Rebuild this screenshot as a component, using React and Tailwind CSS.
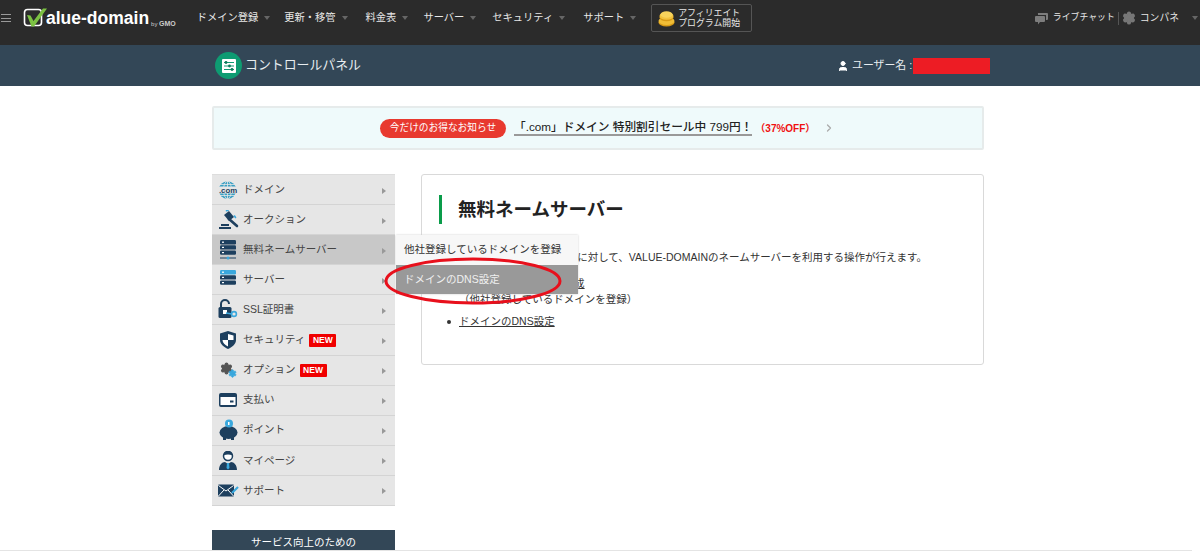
import { ChevronRight, Settings, User } from "lucide-react";

const navItems = [
  { label: "ドメイン登録", className: "ml-[21px]" },
  { label: "更新・移管", className: "ml-[14px]" },
  { label: "料金表", className: "ml-[18px]" },
  { label: "サーバー", className: "ml-[15px]" },
  { label: "セキュリティ", className: "ml-[16px]" },
  { label: "サポート", className: "ml-[18px]" },
];

const Caret = () => (
  <span className="ml-[6px] h-0 w-0 border-x-[3.5px] border-t-[4px] border-x-transparent border-t-[#666]" />
);

const Logo = () => (
  <div className="ml-[12px] flex items-end text-white">
    <svg width="27" height="20" viewBox="0 0 27 20" className="-mr-[4px] mb-[1px]">
      <rect x="1.500" y="1.500" width="17" height="16" rx="3" fill="none" stroke="#fff" strokeWidth="1.600" />
      <path d="M4 7 L7.500 7.500 L10.500 13 L20 0.500 L24 0.500 L11 18.500 L8.500 18.500 Z" fill="#7cc243" />
    </svg>
    <span className="font-['Liberation_Sans'] text-[17.500px] font-bold leading-[22px]">alue-domain</span>
    <span className="mb-[1px] ml-[2px] font-['Liberation_Sans'] text-[6px] leading-[8px] text-[#ccc]">
      by <b className="text-[7px]">GMO</b>
    </span>
  </div>
);

const Coins = () => (
  <svg width="17" height="17" viewBox="0 0 17 17">
    <ellipse cx="8.500" cy="12.500" rx="8" ry="4" fill="#d79a16" />
    <ellipse cx="8.500" cy="11" rx="8" ry="4" fill="#f0bd36" />
    <ellipse cx="8.500" cy="7.500" rx="7" ry="3.800" fill="#d79a16" />
    <ellipse cx="8.500" cy="6" rx="7" ry="3.800" fill="#f2c23e" />
    <ellipse cx="8.500" cy="4.500" rx="6" ry="3.200" fill="#f7d35c" />
  </svg>
);

const ChatIcon = () => (
  <svg width="13" height="13" viewBox="0 0 13 13" fill="#7d7d7d">
    <path d="M3 1h9a1 1 0 0 1 1 1v5a1 1 0 0 1-1 1h-1V3H3V2a1 1 0 0 1 0-1z" />
    <path d="M1 4h8a1 1 0 0 1 1 1v4a1 1 0 0 1-1 1H5l-2 2.500V10H1a1 1 0 0 1-1-1V5a1 1 0 0 1 1-1z" />
  </svg>
);

const PanelIcon = () => (
  <span className="flex h-[27px] w-[27px] items-center justify-center rounded-full bg-[#0e9b72]">
    <svg width="14" height="14" viewBox="0 0 14 14">
      <rect width="14" height="14" rx="1" fill="#fff" />
      <path d="M2 3.500h10M2 7h10M2 10.500h10" stroke="#0e9b72" strokeWidth="1" />
      <circle cx="4" cy="3.500" r="1.400" fill="#0e7a5c" />
      <circle cx="7.500" cy="7" r="1.400" fill="#0e7a5c" />
      <circle cx="10" cy="10.500" r="1.400" fill="#0e7a5c" />
    </svg>
  </span>
);

const dark = "#1d3f5e";
const blue = "#3aa8dd";

const ComIcon = () => (
  <svg width="22" height="20" viewBox="0 0 22 20">
    <circle cx="10.500" cy="10" r="8.800" fill="#3aa0c4" />
    <ellipse cx="10.500" cy="10" rx="4" ry="8.800" fill="none" stroke="#e6e6e6" strokeWidth="0.800" />
    <path d="M3 4.500h15M3 15.500h15M10.500 1v18" stroke="#e6e6e6" strokeWidth="0.800" />
    <rect x="0" y="6.500" width="22" height="7" fill="#e6e6e6" />
    <text x="11" y="12.700" textAnchor="middle" fontSize="7.800" fontWeight="700" fontFamily="Liberation Sans" fill="#1d3f5e">.com</text>
  </svg>
);

const GavelIcon = () => (
  <svg width="21" height="19" viewBox="0 0 21 19">
    <path d="M11 9l8 7" stroke={dark} strokeWidth="2.600" strokeLinecap="round" />
    <path d="M6 5l5-4 5 6-5 4z" fill={dark} />
    <path d="M8.500 0.800l1.500-.5M16.500 6l1 1.500" stroke={blue} strokeWidth="1.600" strokeLinecap="round" />
    <path d="M3 14h8v2H3zM1 17h12v2H1z" fill={dark} />
  </svg>
);

const ServerIcon = ({ top = dark, base }) => (
  <svg width="16" height="20" viewBox="0 0 16 20">
    {[0, 1, 2].map((i) => (
      <g key={i}>
        <rect y={i * 5.200} width="16" height="4.400" rx="1.200" fill={i === 0 ? top : dark} />
        <rect x="2" y={i * 5.200 + 1.600} width="2" height="1.200" fill="#fff" />
      </g>
    ))}
    {base && <path d="M0 18h16" stroke={dark} strokeWidth="1" />}
    {base && <circle cx="8" cy="18" r="1.500" fill={blue} />}
  </svg>
);

const SslIcon = () => (
  <svg width="20" height="21" viewBox="0 0 20 21">
    <path d="M3 8V5a4 4 0 0 1 8 0" fill="none" stroke={dark} strokeWidth="2" />
    <rect x="0.500" y="8" width="13" height="11" rx="1.500" fill={dark} />
    <rect x="5" y="11" width="4" height="4" fill="#fff" />
    <path d="M8 14l6 1" stroke={blue} strokeWidth="1.400" />
    <circle cx="16" cy="15" r="2.400" fill="none" stroke={blue} strokeWidth="1.600" />
  </svg>
);

const ShieldIcon = () => (
  <svg width="16" height="18" viewBox="0 0 16 18">
    <path d="M8 0l8 2.500V9c0 4-3.500 7-8 9-4.500-2-8-5-8-9V2.500z" fill={dark} />
    <path d="M8 3l5.500 1.500V9H8zM8 9v6.500C5 14 2.500 12 2.500 9z" fill="#fff" />
  </svg>
);

const GearsIcon = () => (
  <span className="relative block h-[16px] w-[17px]">
    <Settings size={13} fill="#555" strokeWidth={2.500} className="absolute left-0 top-0 text-[#555]" />
    <Settings size={9} fill="#3aa8dd" strokeWidth={2.500} className="absolute bottom-0 right-0 text-[#3aa8dd]" />
  </span>
);

const CardIcon = () => (
  <svg width="18" height="14" viewBox="0 0 18 14">
    <rect width="18" height="14" rx="2" fill={dark} />
    <rect x="1.500" y="4" width="15" height="8" fill="#fff" />
    <rect x="11" y="7.500" width="3.500" height="2" fill={dark} />
  </svg>
);

const PigIcon = () => (
  <svg width="19" height="22" viewBox="0 0 19 22">
    <ellipse cx="9.500" cy="13.500" rx="9" ry="6.500" fill={dark} />
    <path d="M4 17h3v4H4zM12 17h3v4h-3z" fill={dark} />
    <circle cx="10" cy="4.500" r="4" fill={blue} />
    <rect x="9" y="3" width="1.500" height="3" fill="#fff" />
  </svg>
);

const PersonIcon = () => (
  <svg width="18" height="19" viewBox="0 0 18 19">
    <circle cx="9" cy="5" r="4.500" fill="#fff" stroke={dark} strokeWidth="1.500" />
    <path d="M4.500 4.500a4.500 4.500 0 0 1 9 0c-3-1.500-6-1.500-9 0z" fill={dark} />
    <path d="M0 19c0-5 3-8 6-8l3 2 3-2c3 0 6 3 6 8z" fill={dark} />
    <path d="M8 12h2l.5 5-1.500 1.500L7.500 17z" fill={blue} />
  </svg>
);

const MailIcon = () => (
  <svg width="21" height="13" viewBox="0 0 21 13">
    <rect width="16" height="12" y="0.500" rx="1" fill={dark} />
    <path d="M0.500 1.500L8 7l7.500-5.500M0.500 12L6 6M15.500 12L10 6" fill="none" stroke="#fff" strokeWidth="1" />
    <path d="M14 9l6-6" stroke={blue} strokeWidth="2.200" />
  </svg>
);

const NewBadge = () => (
  <span className="ml-[4px] flex h-[13px] w-[27px] items-center justify-center rounded-[1px] bg-[#f00000] font-['Liberation_Sans'] text-[8.500px] font-bold text-white">
    NEW
  </span>
);

const menu = [
  { label: "ドメイン", icon: <ComIcon /> },
  { label: "オークション", icon: <GavelIcon /> },
  { label: "無料ネームサーバー", icon: <ServerIcon base />, active: true },
  { label: "サーバー", icon: <ServerIcon top={blue} /> },
  { label: "SSL証明書", icon: <SslIcon /> },
  { label: "セキュリティ", icon: <ShieldIcon />, isNew: true },
  { label: "オプション", icon: <GearsIcon />, isNew: true },
  { label: "支払い", icon: <CardIcon /> },
  { label: "ポイント", icon: <PigIcon /> },
  { label: "マイページ", icon: <PersonIcon /> },
  { label: "サポート", icon: <MailIcon /> },
];

const App = () => {
  return (
    <div className="relative h-[553px] w-[1200px] overflow-hidden bg-white font-['Liberation_Sans','Noto_Sans_CJK_JP',sans-serif] text-[10.500px] text-[#333]">
      {/* top bar */}
      <header className="flex h-[45px] items-start bg-[#2b2b2b] text-[#e8e8e8]">
        <div className="flex h-[36px] items-center">
          <div className="ml-[1px] flex w-[10px] flex-col gap-[2.500px]">
            <span className="h-px bg-[#999]" />
            <span className="h-px bg-[#999]" />
            <span className="h-px bg-[#999]" />
          </div>
          <Logo />
          <nav className="flex items-center text-[10.250px]">
            {navItems.map((item) => (
              <div key={item.label} className={`flex items-center ${item.className}`}>
                <span>{item.label}</span>
                <Caret />
              </div>
            ))}
          </nav>
          <a className="ml-[15px] flex h-[28px] w-[101px] items-center gap-[3px] rounded-[2px] border border-[#555] pl-[6px] text-[8.900px] leading-[10.500px]">
            <Coins />
            <span>
              アフィリエイト
              <br />
              プログラム開始
            </span>
          </a>
        </div>
        <div className="ml-auto flex h-[36px] items-center">
          <ChatIcon />
          <span className="ml-[5px] text-[8.900px]">ライブチャット</span>
          <span className="mx-[3px] h-[13px] w-px bg-[#555]" />
          <Settings size={14} fill="#777" strokeWidth={2.500} className="text-[#777]" />
          <span className="ml-[4px] text-[9.800px]">コンパネ</span>
          <span className="ml-[7px] mr-[2px] flex">
            <Caret />
          </span>
        </div>
      </header>

      {/* sub header */}
      <div className="flex h-[41px] items-center bg-[#334757] pl-[215px] text-[#e8edf0]">
        <PanelIcon />
        <span className="ml-[3px] -translate-y-px text-[12.900px]">コントロールパネル</span>
        <User size={12} fill="#fff" strokeWidth={2} className="ml-[476px] text-white" />
        <span className="ml-[3px] text-[10.900px]">ユーザー名 :</span>
        <span className="ml-[1px] mt-[1px] h-[16px] w-[77px] bg-[#ed1c24]" />
      </div>

      <div className="ml-[212px] w-[772px]">
        {/* sale banner */}
        <div className="mt-[20px] flex h-[44px] items-center rounded-[2px] border-2 border-[#e6ebeb] bg-[#effafb] pl-[166px]">
          <span className="flex h-[19px] w-[126px] items-center justify-center rounded-full bg-[#e8392f] text-[9.700px] text-white">
            今だけのお得なお知らせ
          </span>
          <span className="ml-[8px] border-b-2 border-[#999] text-[11.700px] font-medium leading-[14px] text-[#222]">
            「.com」ドメイン 特別割引セール中 799円！
          </span>
          <span className="ml-[3px] text-[10px] font-bold text-[#f01010]">（37%OFF）</span>
          <ChevronRight size={12} strokeWidth={2.500} className="ml-[8px] text-[#aaa]" />
        </div>

        <div className="mt-[24px] flex items-start gap-[26px]">
          {/* sidebar */}
          <aside className="w-[183px] shrink-0">
            <ul className="border-t border-[#ddd]">
              {menu.map((item) => (
                <li
                  key={item.label}
                  className={`flex h-[30.100px] items-center border-b border-[#d4d4d4] pr-[9px] text-[#444] ${item.active ? "bg-[#c8c8c8]" : "bg-[#e6e6e6]"}`}
                >
                  <span className="flex w-[31px] justify-center pl-[1px]">{item.icon}</span>
                  <span>{item.label}</span>
                  {item.isNew && <NewBadge />}
                  <span className="ml-auto mt-[2px] h-0 w-0 border-y-[3px] border-l-[4px] border-y-transparent border-l-[#999]" />
                </li>
              ))}
            </ul>
            <div className="mt-[24px] flex h-[40px] justify-center bg-[#334757] pt-[5px] text-white">
              サービス向上のための
            </div>
          </aside>

          {/* main panel */}
          <main className="h-[191px] w-[563px] rounded-[3px] border border-[#d9d9d9] px-[17px] pt-[20px]">
            <h1 className="border-l-[3px] border-[#0a9c4a] pl-[16px] text-[18.500px] font-bold leading-[29px] text-[#222]">
              無料ネームサーバー
            </h1>
            <p className="mt-[25px] pl-[2px] leading-[16px]">
              他社で登録しているドメインに対して、VALUE-DOMAINのネームサーバーを利用する操作が行えます。
            </p>
            <ul className="mt-[10px] pl-[8px] leading-[16px]">
              <li className="flex">
                <span className="mr-[8px] mt-[7px] h-[4px] w-[4px] shrink-0 rounded-full bg-[#333]" />
                <div>
                  <a className="underline">ネームサーバーの新規作成</a>
                  <br />
                  （他社登録しているドメインを登録）
                </div>
              </li>
              <li className="mt-[6px] flex">
                <span className="mr-[8px] mt-[7px] h-[4px] w-[4px] shrink-0 rounded-full bg-[#333]" />
                <a className="underline">ドメインのDNS設定</a>
              </li>
            </ul>
          </main>
        </div>
      </div>

      {/* flyout menu */}
      <div className="absolute left-[396px] top-[235px] w-[182px] shadow-[0_0_2px_#ccc]">
        <div className="flex h-[30px] items-center bg-[#f7f7f7] pl-[8px]">他社登録しているドメインを登録</div>
        <div className="flex h-[29px] items-center bg-[#999] pl-[8px] text-[#f0f0f0]">ドメインのDNS設定</div>
      </div>

      {/* red marker */}
      <svg width="190" height="54" viewBox="0 0 190 54" className="absolute left-[380px] top-[254px]">
        <ellipse cx="93" cy="27" rx="87" ry="22" fill="none" stroke="#e8101c" strokeWidth="3" />
      </svg>

      <div className="absolute bottom-0 left-0 h-[3px] w-[1192px] border-t border-[#e4e4e4] bg-white" />
    </div>
  );
};

export default App;
